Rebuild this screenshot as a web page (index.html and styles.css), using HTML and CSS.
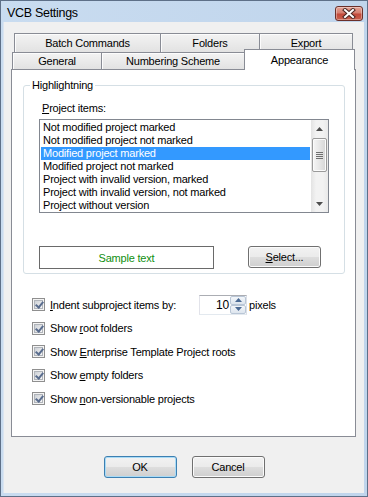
FILE: index.html
```html
<!DOCTYPE html>
<html>
<head>
  <title>VCB Settings</title>
  <link rel="stylesheet" href="styles.css">
</head>
<body>
  <div class="window">
    <div class="titlebar">
      <span class="title">VCB Settings</span>
      <span class="close-btn">
        <svg width="14" height="11" viewBox="0 0 14 11">
          <path d="M3 2 L11 9 M11 2 L3 9" stroke="#4a2622" stroke-width="4" stroke-linecap="square"/>
          <path d="M3 2 L11 9 M11 2 L3 9" stroke="#fff" stroke-width="2" stroke-linecap="square"/>
        </svg>
      </span>
    </div>

    <div class="client">
      <div class="tabs">
        <div class="tab-row back">
          <div class="tab tab-batch">Batch Commands</div>
          <div class="tab tab-folders">Folders</div>
          <div class="tab tab-export">Export</div>
        </div>
        <div class="tab-row front">
          <div class="tab tab-general">General</div>
          <div class="tab tab-numbering">Numbering Scheme</div>
          <div class="tab tab-appearance selected">Appearance</div>
        </div>
      </div>

      <div class="panel">
        <fieldset class="group">
          <legend>Highlightning</legend>
          <div class="field-label"><u>P</u>roject items:</div>
          <div class="listbox">
            <ul class="items">
              <li>Not modified project marked</li>
              <li>Not modified project not marked</li>
              <li class="selected">Modified project marked</li>
              <li>Modified project not marked</li>
              <li>Project with invalid version, marked</li>
              <li>Project with invalid version, not marked</li>
              <li>Project without version</li>
            </ul>
            <div class="scrollbar">
              <div class="sb-arrow">
                <svg width="7" height="4" viewBox="0 0 7 4"><path d="M0 4 L3.5 0 L7 4 Z" fill="#4d4d4d"/></svg>
              </div>
              <div class="sb-thumb">
                <span></span><span></span><span></span><span></span>
              </div>
              <div class="sb-track"></div>
              <div class="sb-arrow">
                <svg width="7" height="4" viewBox="0 0 7 4"><path d="M0 0 L3.5 4 L7 0 Z" fill="#4d4d4d"/></svg>
              </div>
            </div>
          </div>
          <div class="sample-row">
            <div class="sample">Sample text</div>
            <button class="btn select-btn"><u>S</u>elect...</button>
          </div>
        </fieldset>

        <div class="options">
          <div class="option">
            <span class="check"></span>
            <span class="indent-label"><u>I</u>ndent subproject items by:</span>
            <div class="spinner">
              <span class="spin-value">10</span>
              <div class="spin-buttons">
                <span class="spin-btn">
                  <svg width="7" height="4" viewBox="0 0 7 4"><path d="M0 4 L3.5 0 L7 4 Z" fill="#4b6a94"/></svg>
                </span>
                <span class="spin-btn">
                  <svg width="7" height="4" viewBox="0 0 7 4"><path d="M0 0 L3.5 4 L7 0 Z" fill="#4b6a94"/></svg>
                </span>
              </div>
            </div>
            <span class="unit">pixels</span>
          </div>
          <div class="option">
            <span class="check"></span>
            <span>Show <u>r</u>oot folders</span>
          </div>
          <div class="option">
            <span class="check"></span>
            <span>Show <u>E</u>nterprise Template Project roots</span>
          </div>
          <div class="option">
            <span class="check"></span>
            <span>Show <u>e</u>mpty folders</span>
          </div>
          <div class="option">
            <span class="check"></span>
            <span>Show <u>n</u>on-versionable projects</span>
          </div>
        </div>
      </div>

      <div class="buttons">
        <button class="btn default">OK</button>
        <button class="btn">Cancel</button>
      </div>
    </div>
  </div>
</body>
</html>
```

FILE: styles.css
```css
* {
  box-sizing: border-box;
}

body {
  margin: 0;
  font-family: "Liberation Sans", Arial, sans-serif;
  font-size: 11px;
  letter-spacing: -0.2px;
  color: #000;
  background: #fff;
}

.window {
  width: 368px;
  height: 497px;
  display: flex;
  flex-direction: column;
  border: 1px solid #5e7088;
  background: linear-gradient(to right, #c9dcf0, #c0d5ec);
}

/* Title bar */
.titlebar {
  height: 21px;
  display: flex;
  align-items: center;
  padding-left: 6px;
}

.title {
  font-size: 12.5px;
  letter-spacing: -0.3px;
  padding-top: 2px;
}

.close-btn {
  margin-left: auto;
  margin-right: 4px;
  margin-top: 3px;
  width: 28px;
  height: 15px;
  border: 1px solid #6b302a;
  border-radius: 3px;
  background: linear-gradient(#e4a396 0%, #d57f70 45%, #c2493a 55%, #c9614e 100%);
  box-shadow: inset 0 0 0 1px rgba(255, 255, 255, 0.35);
  display: flex;
  align-items: center;
  justify-content: center;
}

/* Client area */
.client {
  flex: 1;
  margin: 0 3px 3px 2px;
  background: #f0f0f0;
  border: 1px solid #dbe5f1;
  border-width: 0 0 0 1px;
  display: flex;
  flex-direction: column;
}

.tabs {
  padding-top: 11px;
}

.tab-row {
  display: flex;
}

.tab-row.back {
  margin-left: 10px;
  height: 19px;
}

.tab-row.front {
  margin-left: 8px;
  height: 17px;
}

.tab {
  height: 100%;
  border: 1px solid #898c95;
  border-bottom: none;
  background: linear-gradient(#f3f3f3, #e2e2e2);
  box-shadow: inset 1px 1px #fcfcfc;
  display: flex;
  align-items: center;
  justify-content: center;
}

.tab + .tab {
  margin-left: -1px;
}

.tab-batch { width: 147px; }
.tab-folders { width: 100px; }
.tab-export { width: 94px; }
.tab-general { width: 90px; }
.tab-numbering { width: 144px; }
.tab-appearance { width: 111px; }

.tab.selected {
  position: relative;
  z-index: 1;
  height: 21px;
  margin-top: -3px;
  background: #fff;
  box-shadow: none;
  padding-bottom: 1px;
}

.panel {
  margin-left: 7px;
  width: 345px;
  height: 368px;
  border: 1px solid #898c95;
  background: #fff;
  padding: 8px 0 0 11px;
}

/* Highlightning group */
.group {
  margin: 0;
  width: 322px;
  border: 1px solid #d5dfe5;
  border-radius: 3px;
  padding: 0 0 4px 6px;
}

.group legend {
  padding: 0 2px;
  line-height: 14px;
}

.field-label {
  margin: 9px 0 3px 12px;
  line-height: 15px;
}

.listbox {
  margin-left: 9px;
  width: 290px;
  height: 94px;
  border: 1px solid #828790;
  display: flex;
}

.items {
  flex: 1;
  list-style: none;
  margin: 0;
  padding: 1px 1px 0;
  overflow: hidden;
}

.items li {
  height: 13px;
  line-height: 13px;
  padding-left: 2px;
  white-space: nowrap;
}

.items li.selected {
  background: #3399ff;
  color: #fff;
}

.scrollbar {
  width: 17px;
  display: flex;
  flex-direction: column;
  background: linear-gradient(to right, #e3e3e3, #f2f2f2 30%, #f2f2f2 70%, #e9e9e9);
}

.sb-arrow {
  height: 17px;
  display: flex;
  align-items: center;
  justify-content: center;
}

.sb-track {
  flex: 1;
}

.sb-thumb {
  margin: 1px 1px 0;
  height: 34px;
  border: 1px solid #9a9a9a;
  border-radius: 2px;
  background: linear-gradient(to right, #f5f5f5, #e6e6e6 50%, #d6d6d6);
  box-shadow: inset 0 0 0 1px #fbfbfb;
  display: flex;
  flex-direction: column;
  align-items: center;
  justify-content: center;
  gap: 1px;
}

.sb-thumb span {
  width: 7px;
  height: 1px;
  background: #6f6f6f;
}

.sample-row {
  margin: 33px 0 0 9px;
  display: flex;
  align-items: flex-start;
}

.sample {
  width: 175px;
  height: 23px;
  border: 1px solid #6a6a6a;
  color: #118f11;
  display: flex;
  align-items: center;
  justify-content: center;
}

.select-btn {
  margin-left: 34px;
}

/* Buttons */
.btn {
  width: 73px;
  height: 22px;
  padding: 0;
  font-family: inherit;
  font-size: 11px;
  letter-spacing: -0.2px;
  color: #000;
  border: 1px solid #707070;
  border-radius: 3px;
  background: linear-gradient(#f2f2f2 0%, #ebebeb 48%, #dddddd 52%, #cfcfcf 100%);
  box-shadow: inset 0 0 0 1px #fbfbfb;
}

.btn.default {
  border-color: #3c7fb1;
  box-shadow: inset 0 0 0 1px #a9dbf6;
}

.buttons {
  margin-top: 19px;
  display: flex;
  justify-content: center;
  gap: 15px;
}

/* Options */
.options {
  margin: 19px 0 0 9px;
}

.option {
  height: 23.5px;
  display: flex;
  align-items: center;
  gap: 5px;
}

.check {
  width: 13px;
  height: 13px;
  flex: none;
  border: 1px solid #8f8f8f;
  background: #f4f4f4;
  position: relative;
}

.check::before {
  content: "";
  position: absolute;
  inset: 1px;
  border: 1px solid #b0b4ba;
  background: linear-gradient(135deg, #cdd1d6, #f6f6f6);
}

.check::after {
  content: "";
  position: absolute;
  left: 4px;
  top: 1px;
  width: 3px;
  height: 6px;
  border: solid #5a6d8e;
  border-width: 0 2px 2px 0;
  transform: rotate(40deg);
}

.indent-label {
  width: 144px;
  flex: none;
}

.spinner {
  width: 48px;
  height: 20px;
  border: 1px solid #abadb3;
  border-color: #abadb3 #dbdfe6 #e3e9ef #e2e3ea;
  display: flex;
  align-items: center;
}

.spin-value {
  flex: 1;
  text-align: right;
  padding-right: 1px;
  font-size: 12px;
}

.spin-buttons {
  width: 16px;
  height: 18px;
  display: flex;
  flex-direction: column;
}

.spin-btn {
  flex: 1;
  border: 1px solid #b9c6d6;
  border-radius: 2px;
  background: linear-gradient(#f3f6fa, #dde5ee);
  display: flex;
  align-items: center;
  justify-content: center;
}

.unit {
  margin-left: -3px;
}
```
